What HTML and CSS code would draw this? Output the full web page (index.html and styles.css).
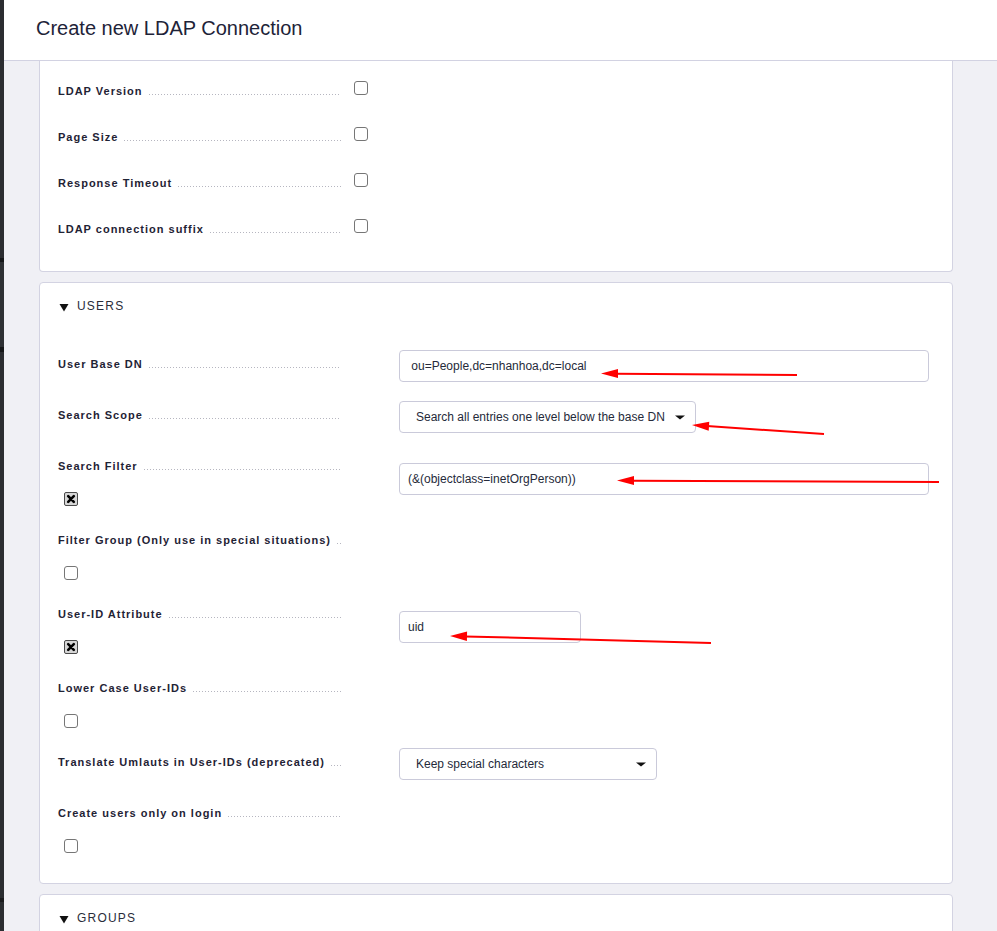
FILE: index.html
```html
<!DOCTYPE html>
<html>
<head>
<meta charset="utf-8">
<title>Create new LDAP Connection</title>
<link rel="stylesheet" href="styles.css">
</head>
<body>
<div class="app">
  <div class="rail"></div>
  <div class="main">
    <header class="topbar"><h1 class="title">Create new LDAP Connection</h1></header>
    <div class="content">
      <section class="card card-cut">
        <div class="irows">
          <div class="irow">
            <div class="label"><span class="ltext">LDAP Version</span><i class="dots"></i></div>
            <span class="cb cb-inline"></span>
          </div>
          <div class="irow">
            <div class="label"><span class="ltext">Page Size</span><i class="dots"></i></div>
            <span class="cb cb-inline"></span>
          </div>
          <div class="irow">
            <div class="label"><span class="ltext">Response Timeout</span><i class="dots"></i></div>
            <span class="cb cb-inline"></span>
          </div>
          <div class="irow">
            <div class="label"><span class="ltext">LDAP connection suffix</span><i class="dots"></i></div>
            <span class="cb cb-inline"></span>
          </div>
        </div>
      </section>

      <section class="card">
        <div class="card-head">
          <svg class="tri" width="10" height="9" viewBox="0 0 10 9"><polygon points="0.5,1 9.5,1 5,8.5" fill="#111"/></svg>
          <span class="head-text">USERS</span>
        </div>
        <div class="rows">
          <div class="row">
            <div class="lcell"><div class="label"><span class="ltext">User Base DN</span><i class="dots"></i></div></div>
            <div class="field"><input class="input input-wide" type="text" value=" ou=People,dc=nhanhoa,dc=local"></div>
          </div>
          <div class="row">
            <div class="lcell"><div class="label"><span class="ltext">Search Scope</span><i class="dots"></i></div></div>
            <div class="field">
              <div class="select select-scope"><span class="sel-text">Search all entries one level below the base DN</span><svg class="caret" width="10" height="5" viewBox="0 0 10 5"><polygon points="0,0.5 10,0.5 5,4.5" fill="#111"/></svg></div>
            </div>
          </div>
          <div class="row">
            <div class="lcell">
              <div class="label"><span class="ltext">Search Filter</span><i class="dots"></i></div>
              <span class="cb cb-below cb-on"><svg width="12" height="12" viewBox="0 0 12 12"><path d="M3.2 3.2 L8.8 8.8 M8.8 3.2 L3.2 8.8" stroke="#000" stroke-width="2.6" stroke-linecap="round"/></svg></span>
            </div>
            <div class="field field-shift"><input class="input input-wide input-tight" type="text" value="(&amp;(objectclass=inetOrgPerson))"></div>
          </div>
          <div class="row">
            <div class="lcell">
              <div class="label"><span class="ltext">Filter Group (Only use in special situations)</span><i class="dots"></i></div>
              <span class="cb cb-below"></span>
            </div>
          </div>
          <div class="row">
            <div class="lcell">
              <div class="label"><span class="ltext">User-ID Attribute</span><i class="dots"></i></div>
              <span class="cb cb-below cb-on"><svg width="12" height="12" viewBox="0 0 12 12"><path d="M3.2 3.2 L8.8 8.8 M8.8 3.2 L3.2 8.8" stroke="#000" stroke-width="2.6" stroke-linecap="round"/></svg></span>
            </div>
            <div class="field field-shift"><input class="input input-short input-tight" type="text" value="uid"></div>
          </div>
          <div class="row">
            <div class="lcell">
              <div class="label"><span class="ltext">Lower Case User-IDs</span><i class="dots"></i></div>
              <span class="cb cb-below"></span>
            </div>
          </div>
          <div class="row">
            <div class="lcell"><div class="label"><span class="ltext">Translate Umlauts in User-IDs (deprecated)</span><i class="dots"></i></div></div>
            <div class="field">
              <div class="select select-umlaut"><span class="sel-text">Keep special characters</span><svg class="caret" width="10" height="5" viewBox="0 0 10 5"><polygon points="0,0.5 10,0.5 5,4.5" fill="#111"/></svg></div>
            </div>
          </div>
          <div class="row">
            <div class="lcell">
              <div class="label"><span class="ltext">Create users only on login</span><i class="dots"></i></div>
              <span class="cb cb-below"></span>
            </div>
          </div>
        </div>
      </section>

      <section class="card card-tail">
        <div class="card-head">
          <svg class="tri" width="10" height="9" viewBox="0 0 10 9"><polygon points="0.5,1 9.5,1 5,8.5" fill="#111"/></svg>
          <span class="head-text">GROUPS</span>
        </div>
      </section>
    </div>
  </div>

  <svg class="annot" width="997" height="931" viewBox="0 0 997 931">
    <g fill="#ff0000" stroke="#ff0000">
      <line x1="615" y1="373.8" x2="797" y2="375" stroke-width="2"/>
      <polygon points="601,373.5 618,369 618,378" stroke="none"/>
      <line x1="707" y1="426.1" x2="824" y2="434" stroke-width="2"/>
      <polygon points="692,425 709.3,421.7 708.7,430.7" stroke="none"/>
      <line x1="632" y1="480.7" x2="939" y2="482" stroke-width="2"/>
      <polygon points="617,480.5 634,476 634,485" stroke="none"/>
      <line x1="465" y1="636.4" x2="711" y2="643" stroke-width="2"/>
      <polygon points="450,636 467.1,631.5 466.9,641" stroke="none"/>
    </g>
  </svg>
</div>
</body>
</html>
```

FILE: styles.css
```css
* { box-sizing: border-box; }

html, body {
  margin: 0;
  padding: 0;
  height: 931px;
  overflow: hidden;
  background: #f0f0f5;
  font-family: "Liberation Sans", Arial, sans-serif;
  color: #1f2335;
}

.app {
  position: relative;
  display: flex;
  width: 997px;
  height: 931px;
}

.rail {
  width: 4px;
  flex: none;
  background: linear-gradient(to bottom,
    #2b2d31 0, #2b2d31 258px, #151618 258px, #151618 262px,
    #2e3034 262px, #2e3034 347px, #151618 347px, #151618 352px,
    #2b2d31 352px, #2b2d31 898px, #1a1b1d 898px, #1a1b1d 902px, #2b2d31 902px);
}

.main {
  flex: 1;
  display: flex;
  flex-direction: column;
  min-width: 0;
}

.topbar {
  height: 61px;
  flex: none;
  background: #ffffff;
  border-bottom: 1px solid #d2d2e2;
  padding-left: 32px;
}

.title {
  margin: 0;
  font-size: 20px;
  font-weight: normal;
  line-height: 56px;
  color: #1e2338;
}

.content {
  flex: 1;
  padding: 0 44px 0 35px;
  display: flex;
  flex-direction: column;
  gap: 10px;
}

.card {
  background: #ffffff;
  border: 1px solid #d3d3e2;
  border-radius: 4px;
}

.card-cut {
  border-top: none;
  border-top-left-radius: 0;
  border-top-right-radius: 0;
  padding: 20px 0 32px 18px;
}

.card-tail {
  padding-bottom: 40px;
}

.irows {
  display: flex;
  flex-direction: column;
  gap: 26px;
}

.irow {
  display: flex;
  align-items: flex-start;
}

.label {
  width: 283px;
  height: 20px;
  display: flex;
  align-items: flex-end;
  white-space: nowrap;
}

.ltext {
  font-size: 11px;
  font-weight: bold;
  letter-spacing: 1px;
  line-height: 20px;
  color: #1f2335;
}

.dots {
  flex: 1;
  min-width: 0;
  height: 1px;
  margin: 0 0 6px 6px;
  background-image: linear-gradient(to right, #b6b6c0 1px, transparent 1px);
  background-size: 3px 1px;
  background-repeat: repeat-x;
}

.cb {
  width: 14px;
  height: 14px;
  flex: none;
  border: 1px solid #767676;
  border-radius: 3px;
  background: #ffffff;
  display: block;
}

.cb-inline {
  margin: 0 0 0 13px;
}

.cb-below {
  margin: 16px 0 1px 6px;
}

.cb-on {
  background: #d6d6d6;
  border-color: #4a4a4a;
  border-radius: 2px;
  display: flex;
  align-items: center;
  justify-content: center;
}

.card-head {
  display: flex;
  align-items: center;
  padding: 13px 18px 0 19px;
  height: 33px;
  line-height: 20px;
}

.tri {
  display: block;
  margin-top: 2px;
}

.head-text {
  margin-left: 8px;
  font-size: 12px;
  letter-spacing: 1.2px;
  color: #2a2d3a;
}

.rows {
  display: flex;
  flex-direction: column;
  gap: 19px;
  padding: 34px 0 29px 18px;
}

.row {
  display: flex;
  align-items: flex-start;
}

.lcell {
  width: 283px;
  flex: none;
  padding-top: 4px;
}

.field {
  margin-left: 58px;
}

.field-shift {
  margin-top: 11px;
}

.input {
  display: block;
  height: 32px;
  border: 1px solid #cacada;
  border-radius: 4px;
  background: #ffffff;
  font-family: "Liberation Sans", Arial, sans-serif;
  font-size: 12px;
  color: #252a3a;
  padding: 0 8px;
  outline: none;
}

.input-wide { width: 530px; }
.input-short { width: 182px; }

.select {
  height: 32px;
  border: 1px solid #cacada;
  border-radius: 4px;
  background: #ffffff;
  display: flex;
  align-items: center;
  padding: 0 10px 0 16px;
}

.select-scope { width: 297px; }
.select-umlaut { width: 258px; }

.sel-text {
  flex: 1;
  font-size: 12px;
  color: #252a3a;
  white-space: nowrap;
}

.caret {
  display: block;
  flex: none;
  margin-top: 1px;
}

.annot {
  position: absolute;
  left: 0;
  top: 0;
  pointer-events: none;
}
```
